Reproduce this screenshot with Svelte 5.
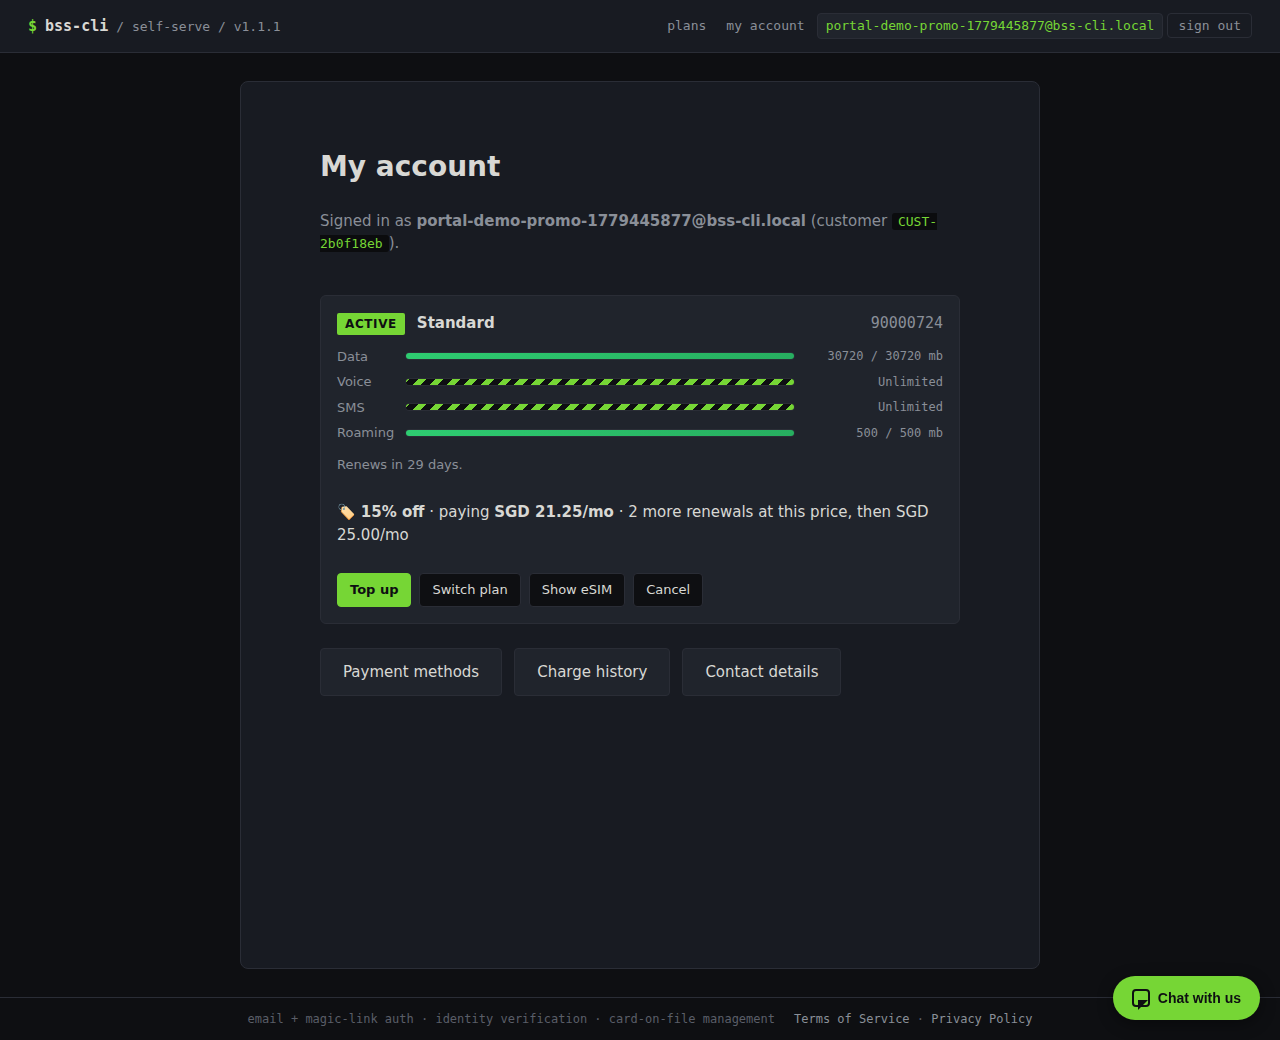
<script>
  const email = 'portal-demo-promo-1779445877@bss-cli.local';
  const balances = [
    { label: 'Data', value: '30720 / 30720 mb', percent: 100 },
    { label: 'Voice', value: 'Unlimited', unlimited: true },
    { label: 'SMS', value: 'Unlimited', unlimited: true },
    { label: 'Roaming', value: '500 / 500 mb', percent: 100 }
  ];
  const actions = ['Switch plan', 'Show eSIM', 'Cancel'];
  const links = ['Payment methods', 'Charge history', 'Contact details'];
</script>

<div class="page">
  <header class="topbar">
    <a class="brand" href="#home">
      <span class="prompt">$</span>
      <span class="name">bss-cli</span>
      <span class="sub">/ self-serve / v1.1.1</span>
    </a>
    <nav class="nav">
      <a class="navlink" href="#plans">plans</a>
      <a class="navlink" href="#account">my account</a>
      <span class="identity">{email}</span>
      <button class="signout" type="button">sign out</button>
    </nav>
  </header>

  <main class="main">
    <section class="panel">
      <div class="content">
        <h1>My account</h1>
        <p class="lead">
          Signed in as <strong>{email}</strong> (customer <code>CUST-2b0f18eb</code>).
        </p>

        <article class="card">
          <div class="cardhead">
            <span class="badge">ACTIVE</span>
            <strong class="plan">Standard</strong>
            <span class="number">90000724</span>
          </div>
          <div class="balances">
            {#each balances as b}
              <div class="row">
                <span class="label">{b.label}</span>
                <div class="bar">
                  {#if b.unlimited}
                    <div class="fill striped"></div>
                  {:else}
                    <div class="fill" style="width: {b.percent}%"></div>
                  {/if}
                </div>
                <span class="value">{b.value}</span>
              </div>
            {/each}
          </div>
          <p class="renews">Renews in 29 days.</p>
          <p class="promo">
            🏷️ <strong>15% off</strong> · paying <strong>SGD 21.25/mo</strong> · 2 more renewals at this price, then SGD 25.00/mo
          </p>
          <div class="actions">
            <a class="action primary" href="#top-up">Top up</a>
            {#each actions as a}
              <a class="action" href="#action">{a}</a>
            {/each}
          </div>
        </article>

        <div class="links">
          {#each links as l}
            <a class="link" href="#link">{l}</a>
          {/each}
        </div>
      </div>
    </section>
  </main>

  <footer class="footer">
    <span>email + magic-link auth · identity verification · card-on-file management</span>
    <span class="legal"><a href="#terms">Terms of Service</a> · <a href="#privacy">Privacy Policy</a></span>
  </footer>

  <button class="chat" type="button">
    <svg width="18" height="24" viewBox="0 0 18 24" aria-hidden="true">
      <rect x="1" y="4" width="16" height="16" rx="3" fill="none" stroke="currentColor" stroke-width="2" />
      <path d="M6 14h10L6 24z" fill="currentColor" />
    </svg>
    Chat with us
  </button>
</div>

<style>
  :global(body) {
    margin: 0;
    background: #0e0f12;
  }
  .page {
    --bg: #0e0f12;
    --panel: #181b22;
    --raised: #20242c;
    --line: #2a2d36;
    --text: #d8d8d4;
    --dim: #8a8f98;
    --accent: #76d635;
    --mono: 'DejaVu Sans Mono', monospace;
    display: flex;
    flex-direction: column;
    min-height: 100vh;
    background: var(--bg);
    color: var(--text);
    font: 15px/1.5 'DejaVu Sans', sans-serif;
  }
  a {
    color: inherit;
    text-decoration: none;
  }
  .topbar {
    display: flex;
    align-items: center;
    justify-content: space-between;
    padding: 13px 28px;
    background: var(--panel);
    border-bottom: 1px solid var(--line);
    font-family: var(--mono);
  }
  .brand {
    display: flex;
    align-items: baseline;
    gap: 8px;
  }
  .prompt {
    color: var(--accent);
    font-weight: 700;
  }
  .name {
    font-weight: 700;
  }
  .sub {
    color: var(--dim);
    font-size: 13px;
  }
  .nav {
    display: flex;
    align-items: baseline;
    gap: 4px;
    font-size: 13px;
    line-height: 20px;
    color: var(--dim);
  }
  .navlink {
    padding: 0 8px;
  }
  .identity {
    padding: 2px 8px;
    color: var(--accent);
    background: var(--raised);
    border: 1px solid var(--line);
    border-radius: 4px;
  }
  .signout {
    padding: 4px 10px;
    font: 13px/15px var(--mono);
    color: var(--dim);
    background: none;
    border: 1px solid var(--line);
    border-radius: 4px;
  }
  .main {
    flex: 1;
    display: flex;
    justify-content: center;
    padding: 28px;
  }
  .panel {
    box-sizing: border-box;
    width: 100%;
    max-width: 800px;
    padding: 68px 24px;
    background: var(--panel);
    border: 1px solid var(--line);
    border-radius: 8px;
  }
  .content {
    max-width: 640px;
    margin: 0 auto;
  }
  h1 {
    margin: 0 0 26px;
    font-size: 28px;
    line-height: 1.2;
  }
  .lead {
    margin: 0 0 40px;
    color: var(--dim);
  }
  code {
    padding: 1px 6px;
    font: 13px var(--mono);
    color: var(--accent);
    background: #0b0c0e;
    border-radius: 3px;
  }
  .card {
    padding: 16px;
    background: var(--raised);
    border: 1px solid var(--line);
    border-radius: 6px;
  }
  .cardhead {
    display: flex;
    align-items: baseline;
    gap: 12px;
    margin-bottom: 12px;
  }
  .badge {
    padding: 2px 8px;
    font-size: 12px;
    font-weight: 700;
    letter-spacing: 0.05em;
    color: var(--bg);
    background: var(--accent);
    border-radius: 2px;
  }
  .number {
    margin-left: auto;
    font-family: var(--mono);
    color: var(--dim);
  }
  .balances {
    display: grid;
    gap: 6px;
  }
  .row {
    display: grid;
    grid-template-columns: 56px 1fr 136px;
    gap: 12px;
    align-items: center;
    font-size: 13px;
    color: var(--dim);
  }
  .bar {
    height: 6px;
    overflow: hidden;
    background: var(--bg);
    border: 1px solid var(--line);
    border-radius: 4px;
  }
  .fill {
    height: 100%;
    background: linear-gradient(90deg, #2ecc71, #27ae60);
  }
  .striped {
    background: repeating-linear-gradient(-45deg, var(--accent) 0 6px, var(--bg) 6px 12px);
  }
  .value {
    font-family: var(--mono);
    font-size: 12px;
    text-align: right;
  }
  .renews {
    margin: 12px 0 27px;
    font-size: 13px;
    color: var(--dim);
  }
  .promo {
    margin: 0 0 27px;
  }
  .actions {
    display: flex;
    flex-wrap: wrap;
    gap: 8px;
  }
  .action {
    padding: 6px 12px;
    font-size: 13px;
    background: var(--bg);
    border: 1px solid var(--line);
    border-radius: 4px;
  }
  .primary {
    font-weight: 700;
    color: var(--bg);
    background: var(--accent);
    border-color: var(--accent);
  }
  .links {
    display: flex;
    flex-wrap: wrap;
    gap: 12px;
    margin-top: 24px;
  }
  .link {
    padding: 12px 22px;
    background: var(--raised);
    border: 1px solid var(--line);
    border-radius: 4px;
  }
  .footer {
    display: flex;
    flex-wrap: wrap;
    justify-content: center;
    gap: 19px;
    padding: 12px 28px;
    border-top: 1px solid var(--line);
    font: 12px/18px var(--mono);
    color: #5a5e68;
  }
  .legal a {
    color: var(--dim);
  }
  .chat {
    position: fixed;
    right: 20px;
    bottom: 20px;
    display: flex;
    align-items: center;
    gap: 8px;
    height: 44px;
    padding: 0 19px;
    font: 700 14px 'Liberation Sans', sans-serif;
    color: var(--bg);
    background: var(--accent);
    border: 0;
    border-radius: 22px;
    box-shadow: 0 4px 16px rgba(0, 0, 0, 0.4);
  }
</style>
